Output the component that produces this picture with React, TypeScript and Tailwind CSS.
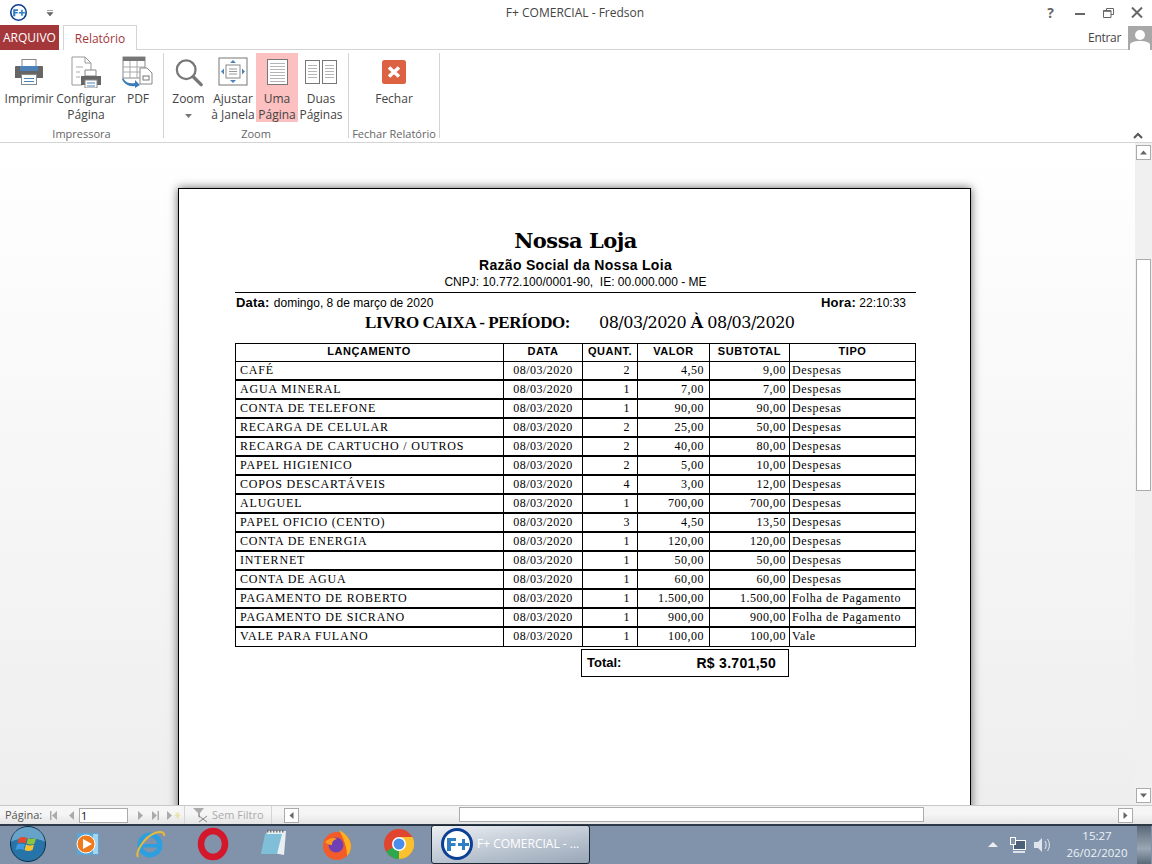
import React from "react";

const rows: [string, string, string, string, string][] = [
  ["CAFÉ", "2", "4,50", "9,00", "Despesas"],
  ["AGUA MINERAL", "1", "7,00", "7,00", "Despesas"],
  ["CONTA DE TELEFONE", "1", "90,00", "90,00", "Despesas"],
  ["RECARGA DE CELULAR", "2", "25,00", "50,00", "Despesas"],
  ["RECARGA DE CARTUCHO / OUTROS", "2", "40,00", "80,00", "Despesas"],
  ["PAPEL HIGIENICO", "2", "5,00", "10,00", "Despesas"],
  ["COPOS DESCARTÁVEIS", "4", "3,00", "12,00", "Despesas"],
  ["ALUGUEL", "1", "700,00", "700,00", "Despesas"],
  ["PAPEL OFICIO (CENTO)", "3", "4,50", "13,50", "Despesas"],
  ["CONTA DE ENERGIA", "1", "120,00", "120,00", "Despesas"],
  ["INTERNET", "1", "50,00", "50,00", "Despesas"],
  ["CONTA DE AGUA", "1", "60,00", "60,00", "Despesas"],
  ["PAGAMENTO DE ROBERTO", "1", "1.500,00", "1.500,00", "Folha de Pagamento"],
  ["PAGAMENTO DE SICRANO", "1", "900,00", "900,00", "Folha de Pagamento"],
  ["VALE PARA FULANO", "1", "100,00", "100,00", "Vale"],
];

const ui = "font-['Open_Sans','Noto_Sans',sans-serif]";
const cols = "grid grid-cols-[268px_79px_55px_72px_80px_126px]";
const serif = "font-['Liberation_Serif',serif]";
const arial = "font-['Liberation_Sans',sans-serif]";

function FLogo({ size }: { size: number }) {
  return (
    <svg width={size} height={size} viewBox="0 0 32 32">
      <circle cx="16" cy="16" r="14.5" fill="#fff" stroke="#0b3f94" strokeWidth="3" />
      <path d="M6 10h9v3H10v2h4.500v3H10v5H6zM17 15h4v-4h3v4h4v3h-4v4h-3v-4h-4z" fill="#2f7fc4" />
    </svg>
  );
}

function RibbonBtn({ label, icon, w, active }: { label: React.ReactNode; icon: React.ReactNode; w: string; active?: boolean }) {
  return (
    <div className={`${w} h-[69px] flex flex-col items-center shrink-0 ${active ? "bg-[#fcc0c0]" : ""}`}>
      <div className="h-[38px] shrink-0 flex items-center justify-center">{icon}</div>
      <div className="shrink-0 text-center text-[12px] leading-[16px] text-[#444] whitespace-nowrap">{label}</div>
    </div>
  );
}

function Group({ label, children, w }: { label: string; children: React.ReactNode; w: string }) {
  return (
    <div className={`${w} h-[85px] mt-[3px] flex flex-col border-r border-[#d4d4d4] shrink-0`}>
      <div className="flex justify-start pl-[1px] h-[72px] shrink-0">{children}</div>
      <div className="text-center text-[11px] leading-[17px] text-[#666] whitespace-nowrap">{label}</div>
    </div>
  );
}

function PrinterIcon() {
  return (
    <svg width="30" height="26" viewBox="0 0 30 26">
      <rect x="8" y="0.500" width="14" height="8" fill="#fff" stroke="#888" />
      <path d="M2 7h26a1 1 0 0 1 1 1v11H1V8a1 1 0 0 1 1-1z" fill="#666" />
      <rect x="6" y="7" width="18" height="5" fill="#4d82b8" />
      <rect x="7.500" y="15.500" width="15" height="10" fill="#fff" stroke="#888" />
      <path d="M10 19.500h10M10 22.500h10" stroke="#4d82b8" />
    </svg>
  );
}

function ConfigIcon() {
  return (
    <svg width="32" height="32" viewBox="0 0 32 32">
      <path d="M2 1h13l6 6v14H12v8H2z" fill="#fff" stroke="#999" />
      <path d="M15 1v6h6" fill="none" stroke="#999" />
      <path d="M6 11h7M6 16h4M6 21h4" stroke="#aaa" />
      <path d="M15 14h11v6H15z" fill="#fff" stroke="#888" />
      <path d="M11 20h20v9H11z" fill="#666" />
      <rect x="15" y="24" width="12" height="8" fill="#fff" stroke="#888" />
      <path d="M17 27h8M17 30h8" stroke="#4d82b8" />
    </svg>
  );
}

function PdfIcon() {
  return (
    <svg width="32" height="32" viewBox="0 0 32 32">
      <rect x="1" y="1" width="22" height="21" fill="#fff" stroke="#888" />
      <rect x="1" y="1" width="22" height="4" fill="#777" />
      <path d="M8 5v17M15 5v17M1 11h22M1 16h22" stroke="#aaa" />
      <path d="M18 12h7l5 5v11H18z" fill="#fff" stroke="#888" />
      <rect x="21" y="20" width="6" height="4" fill="#fff" stroke="#777" />
      <path d="M1 22c3 5 7 6 12 5v-3l5 5-5 3v-2c-6 1-11-2-13-7z" fill="#3d7cb8" />
    </svg>
  );
}

function ZoomIcon() {
  return (
    <svg width="28" height="29" viewBox="0 0 30 30">
      <circle cx="12" cy="12" r="10" fill="#fff" stroke="#777" strokeWidth="2.400" />
      <path d="M19.500 19.500L28 28" stroke="#777" strokeWidth="3.600" strokeLinecap="round" />
    </svg>
  );
}

function FitIcon() {
  return (
    <svg width="30" height="30" viewBox="0 0 30 30">
      <rect x="1" y="1" width="28" height="27" fill="#fff" stroke="#777" />
      <rect x="8" y="8" width="14" height="13" fill="#fff" stroke="#888" />
      <path d="M11 12h8M11 14.500h8M11 17h8" stroke="#999" />
      <path d="M15 3l3 3h-6zM15 26l3-3h-6zM3 14.500l3-3v6zM27 14.500l-3-3v6z" fill="#4d82b8" />
    </svg>
  );
}

function OnePageIcon() {
  return (
    <svg width="21" height="26" viewBox="0 0 21 26">
      <rect x="0.500" y="0.500" width="20" height="25" fill="#fff" stroke="#777" />
      <path d="M3 4.500h15M3 7.500h15M3 10.500h15M3 13.500h15M3 16.500h15M3 19.500h15M3 22.500h15" stroke="#b5b5b5" />
    </svg>
  );
}

function TwoPagesIcon() {
  return (
    <svg width="32" height="24" viewBox="0 0 32 24">
      <rect x="0.500" y="0.500" width="14" height="23" fill="#fff" stroke="#777" />
      <rect x="17.500" y="0.500" width="14" height="23" fill="#fff" stroke="#777" />
      <path d="M3 5.500h9M3 8.500h9M3 11.500h9M3 14.500h9M3 17.500h9M20 5.500h9M20 8.500h9M20 11.500h9M20 14.500h9M20 17.500h9" stroke="#b5b5b5" />
    </svg>
  );
}

function CloseIcon() {
  return (
    <svg width="24" height="24" viewBox="0 0 24 24">
      <rect width="24" height="24" rx="2.500" fill="#dc6243" />
      <path d="M7 7.500l10 9M17 7.500l-10 9" stroke="#fff" strokeWidth="3.600" />
    </svg>
  );
}

function Ribbon() {
  return (
    <div className="h-[93px] border-b border-[#d4d4d4] flex relative bg-white shrink-0">
      <Group label="Impressora" w="w-[164px]">
        <RibbonBtn w="w-[56px]" label="Imprimir" icon={<PrinterIcon />} />
        <RibbonBtn w="w-[58px]" label={<>Configurar<br />Página</>} icon={<ConfigIcon />} />
        <RibbonBtn w="w-[46px]" label="PDF" icon={<PdfIcon />} />
      </Group>
      <Group label="Zoom" w="w-[185px]">
        <RibbonBtn
          w="w-[47px]"
          label={
            <>
              Zoom
              <br />
              <svg className="inline-block align-middle" width="7" height="4" viewBox="0 0 7 4"><path d="M0 0h7L3.500 4z" fill="#777" /></svg>
            </>
          }
          icon={<ZoomIcon />}
        />
        <RibbonBtn w="w-[42px]" label={<>Ajustar<br />à Janela</>} icon={<FitIcon />} />
        <RibbonBtn w="w-[42px] ml-[2px]" active label={<>Uma<br />Página</>} icon={<OnePageIcon />} />
        <RibbonBtn w="w-[46px]" label={<>Duas<br />Páginas</>} icon={<TwoPagesIcon />} />
      </Group>
      <Group label="Fechar Relatório" w="w-[91px]">
        <RibbonBtn w="w-[88px]" label="Fechar" icon={<CloseIcon />} />
      </Group>
      <svg className="absolute right-[9px] bottom-[3px]" width="10" height="7" viewBox="0 0 10 7">
        <path d="M1 6l4-4 4 4" fill="none" stroke="#555" strokeWidth="2" />
      </svg>
    </div>
  );
}

function ScrollBtn({ d }: { d: string }) {
  return (
    <div className="w-[15px] h-[15px] border border-[#ababab] bg-white flex items-center justify-center shrink-0">
      <svg width="9" height="9" viewBox="0 0 9 9"><path d={d} fill="#666" /></svg>
    </div>
  );
}

function Report() {
  return (
    <div className="w-[793px] h-[700px] bg-white border border-black shadow-[0_0_9px_rgba(0,0,0,0.6)] shrink-0 pt-[40px] pl-[56px] text-black">
      <div className="w-[681px]">
        <div className="h-[28px] text-center text-[21px] leading-[24px] font-bold font-['DejaVu_Serif',serif] tracking-[-0.5px]">Nossa Loja</div>
        <div className={`${arial} text-center text-[14px] leading-[17px] font-bold tracking-[0.3px] h-[18px]`}>Razão Social da Nossa Loia</div>
        <div className={`${arial} text-center text-[12px] leading-[14px] h-[17px]`}>CNPJ: 10.772.100/0001-90,&nbsp; IE: 00.000.000 - ME</div>
        <div className="border-t border-black h-[20px] flex justify-between pl-[1px] pr-[10px] pt-[3px]">
          <span className={`${arial} text-[12px] leading-[14px]`}><b className="text-[13px] tracking-[0.2px]">Data:</b> <span className="ml-[1px]">domingo, 8 de março de 2020</span></span>
          <span className={`${arial} text-[12px] leading-[14px]`}><b className="text-[13px] tracking-[0.2px]">Hora:</b> 22:10:33</span>
        </div>
        <div className="h-[31px] pt-[1px] flex text-[16px] leading-[20px] whitespace-nowrap">
          <span className={`ml-[130px] w-[234px] font-bold text-[17px] tracking-[-0.4px] ${serif}`}>LIVRO CAIXA - PERÍODO:</span>
          <span className="tracking-[-0.5px] font-['DejaVu_Serif',serif]">08/03/2020 <b>À</b> 08/03/2020</span>
        </div>
        <div className="border-x border-t border-black">
          <div className={`${cols} -mx-[1px] h-[18px] ${arial} text-[11px] leading-[14px] font-bold tracking-[0.55px] text-center border-b border-black`}>
            <div>LANÇAMENTO</div>
            <div className="border-l border-black">DATA</div>
            <div className="border-l border-black whitespace-nowrap">QUANT.</div>
            <div className="border-l border-black">VALOR</div>
            <div className="border-l border-black">SUBTOTAL</div>
            <div className="border-l border-black">TIPO</div>
          </div>
          {rows.map((r, i) => (
            <div key={i} className={`${cols} -mx-[1px] h-[19px] ${serif} text-[12px] leading-[17px] tracking-[0.5px] ${i === rows.length - 1 ? "border-b" : "border-b-2"} border-black`}>
              <div className="pl-[5px] whitespace-nowrap tracking-[0.82px]">{r[0]}</div>
              <div className="border-l border-black text-center">08/03/2020</div>
              <div className="border-l border-black text-right pr-[7px]">{r[1]}</div>
              <div className="border-l border-black text-right pr-[5px]">{r[2]}</div>
              <div className="border-l border-black text-right pr-[3px]">{r[3]}</div>
              <div className="border-l border-black pl-[2px] whitespace-nowrap tracking-[0.62px]">{r[4]}</div>
            </div>
          ))}
        </div>
        <div className={`ml-[346px] mt-[2px] w-[208px] h-[28px] border border-black flex justify-between items-center pl-[5px] pr-[12px] ${arial} font-bold`}>
          <span className="text-[13px]">Total:</span>
          <span className="text-[14px] tracking-[0.3px]">R$ 3.701,50</span>
        </div>
      </div>
    </div>
  );
}

function TaskIcon({ children, w }: { children: React.ReactNode; w: string }) {
  return <div className={`${w} h-[38px] pb-[2px] flex items-center justify-center shrink-0`}>{children}</div>;
}

function NavIcon({ d, className }: { d: string; className?: string }) {
  return (
    <svg className={`shrink-0 ${className ?? ""}`} width="7" height="9" viewBox="0 0 7 9"><path d={d} fill="#aaa" /></svg>
  );
}

export default function App() {
  return (
    <div className={`w-[1152px] h-[864px] overflow-hidden flex flex-col bg-white ${ui}`}>
      {/* title bar */}
      <div className="h-[25px] flex items-center relative shrink-0">
        <div className="ml-[10px]"><FLogo size={17} /></div>
        <svg className="ml-[19px]" width="8" height="8" viewBox="0 0 8 8"><path d="M1 1.500h6M1 3.500h6L4 7z" fill="#666" stroke="#666" strokeWidth="0.600" /></svg>
        <div className="flex-1 text-center text-[12px] text-[#444] pl-[60px]">F+ COMERCIAL - Fredson</div>
        <div className="flex items-center text-[#666]">
          <div className="w-[29px] text-center font-bold text-[14px] leading-none">?</div>
          <div className="w-[29px] flex justify-center"><div className="w-[10px] h-[2px] bg-[#666] mt-[2px]" /></div>
          <div className="w-[29px] flex justify-center">
            <svg width="11" height="10" viewBox="0 0 11 10"><path d="M3.500 2.500V.500h7v6H8M.500 2.500h7.500v7H.500z" fill="none" stroke="#666" /><path d="M.500 3h7.500" stroke="#666" strokeWidth="1.600" /></svg>
          </div>
          <div className="w-[29px] flex justify-center pr-[2px]">
            <svg width="12" height="11" viewBox="0 0 12 11"><path d="M1 .500l10 10M11 .500l-10 10" stroke="#666" strokeWidth="2" /></svg>
          </div>
        </div>
      </div>
      {/* tabs */}
      <div className="h-[25px] flex items-end relative shrink-0 z-10">
        <div className="w-[59px] h-[25px] bg-[#a4373a] text-white text-[12px] leading-[25px] text-center">ARQUIVO</div>
        <div className="ml-[4px] w-[74px] h-[25px] border-x border-t border-[#d4d4d4] bg-white text-[#a4373a] text-[12px] leading-[25px] text-center">Relatório</div>
        <div className="flex-1 h-px bg-[#d4d4d4]" />
        <div className="absolute right-0 top-0 flex items-center h-[25px]">
          <span className="text-[12px] tracking-[-0.3px] text-[#444] mr-[7px]">Entrar</span>
          <svg width="24" height="24" viewBox="0 0 24 24">
            <rect width="24" height="24" fill="#a8a8a8" />
            <circle cx="12" cy="9" r="5" fill="#fff" />
            <path d="M2 24v-5c0-3 5-4 10-4s10 1 10 4v5z" fill="#fff" />
          </svg>
        </div>
      </div>
      <Ribbon />
      {/* content */}
      <div className="flex-1 min-h-0 flex">
        <div className="flex-1 min-w-0 bg-[linear-gradient(#ffffff,#eeeeee)] overflow-hidden pt-[45px] pl-[178px]">
          <Report />
        </div>
        <div className="w-[17px] flex flex-col px-[1px] py-[2px] bg-[#f0f0f0]">
          <ScrollBtn d="M4.500 2.500L8 6.500H1z" />
          <div className="flex-1 relative">
            <div className="absolute left-0 w-[15px] top-[99px] h-[232px] bg-white border border-[#ababab]" />
          </div>
          <ScrollBtn d="M1 2.500h7L4.500 6.500z" />
        </div>
      </div>
      {/* status bar */}
      <div className="h-[19px] border-t border-[#c8c8c8] bg-[linear-gradient(#f5f5f5_45%,#e4e4e4)] flex items-center text-[11px] text-[#555] shrink-0">
        <div className="w-[185px] flex items-center h-full border-r border-[#d4d4d4] pl-[5px]">
          <span className="w-[45px] shrink-0">Página:</span>
          <NavIcon d="M0 0h1.500v9H0zM7 0v9L2 4.500z" />
          <NavIcon className="ml-[11px]" d="M6 0v9L1 4.500z" />
          <div className="ml-[4px] w-[49px] h-[15px] bg-white border border-[#ababab] text-[11px] leading-[13px] text-[#111] pl-[1px] shrink-0">1</div>
          <NavIcon className="ml-[9px]" d="M1 0v9l5-4.500z" />
          <NavIcon className="ml-[8px]" d="M0 0v9l5-4.500zM5.500 0H7v9H5.500z" />
          <NavIcon className="ml-[8px]" d="M0 0v9l5-4.500z" />
          <svg className="shrink-0" width="7" height="9" viewBox="0 0 7 9"><path d="M3.500 1v7M.5 4.500h6M1.500 2l4 5M5.500 2l-4 5" stroke="#e6e2a8" /></svg>
        </div>
        <div className="w-[87px] flex items-center h-full border-r border-[#d4d4d4] pl-[7px] text-[#aaa]">
          <svg className="shrink-0" width="17" height="16" viewBox="0 0 17 16"><path d="M1 1h11L8 6v5L6 9.500V6z" fill="#aaa" /><path d="M7 9l8 6M15 9l-8 6" stroke="#888" /></svg>
          <span className="ml-[3px] text-[11px] whitespace-nowrap">Sem Filtro</span>
        </div>
        <div className="w-[863px] h-full flex items-center pl-[12px] pr-[2px]">
          <ScrollBtn d="M2.500 4.500L6.500 1v7z" />
          <div className="flex-1 relative h-full">
            <div className="absolute left-[160px] w-[465px] top-[1px] h-[15px] bg-white border border-[#ababab]" />
          </div>
          <ScrollBtn d="M6.500 4.500L2.500 1v7z" />
        </div>
      </div>
      {/* taskbar */}
      <div className="h-[40px] bg-[#8093ab] border-t-[2px] border-[#2f3a48] flex items-center relative shrink-0">
        <TaskIcon w="w-[55px]">
          <svg width="36" height="36" viewBox="0 0 36 36">
            <circle cx="18" cy="18" r="17.500" fill="#2674a8" stroke="#0d2c48" />
            <path d="M1 16C2 6 10 1 18 1s16 5 17 15c-8-5-26-5-34 0z" fill="#9ccbe4" opacity=".55" />
            <path d="M9 12c3-1.500 5-1.500 8 0l-1.500 5.500c-3-1.300-5-1.300-8 0z" fill="#e2492f" />
            <path d="M18 12c3 1.300 5 1.300 8 0l-1.500 5.500c-3 1.300-5 1.300-8 0z" fill="#8cc43c" />
            <path d="M7 18.500c3-1.300 5-1.300 8 0l-1.500 5.500c-3-1.300-5-1.300-8 0z" fill="#3f9be0" />
            <path d="M16 18.500c3 1.300 5 1.300 8 0L22.500 24c-3 1.300-5 1.300-8 0z" fill="#f6c12f" />
          </svg>
        </TaskIcon>
        <TaskIcon w="w-[66px]">
          <svg width="26" height="26" viewBox="0 0 26 26">
            <rect x="2" y="2" width="22" height="22" rx="1" fill="#5aa6d6" />
            <rect x="18" y="3" width="5" height="20" fill="#a5d4ee" />
            <circle cx="11" cy="13" r="9" fill="#ef7b1c" stroke="#fff" strokeWidth="1" />
            <path d="M8 8l9 5-9 5z" fill="#fff" />
          </svg>
        </TaskIcon>
        <TaskIcon w="w-[60px]">
          <svg width="32" height="32" viewBox="0 0 32 32">
            <circle cx="15" cy="17" r="10" fill="none" stroke="#2b9fe0" strokeWidth="5" />
            <path d="M7 16h17v3.500H8z" fill="#2b9fe0" />
            <path d="M3 29C0 25 9 9 20 5c6-2 10-1 9 3" fill="none" stroke="#e8b93a" strokeWidth="2" />
          </svg>
        </TaskIcon>
        <TaskIcon w="w-[64px]">
          <svg width="32" height="34" viewBox="0 0 32 34">
            <ellipse cx="16" cy="17" rx="12" ry="13" fill="none" stroke="#d3182b" strokeWidth="6.500" />
          </svg>
        </TaskIcon>
        <TaskIcon w="w-[58px]">
          <svg width="30" height="30" viewBox="0 0 30 30">
            <path d="M8 2h19l-2 24-21-4z" fill="#e8eef2" />
            <path d="M6 5h17l-5 20H2z" fill="#7fc0d8" />
            <path d="M8 2h17" stroke="#777" strokeWidth="3" strokeDasharray="1.500 1.500" />
          </svg>
        </TaskIcon>
        <TaskIcon w="w-[68px]">
          <svg width="32" height="32" viewBox="0 0 32 32">
            <circle cx="16" cy="18" r="14" fill="#f25c2a" />
            <path d="M18 2c6 3 12 9 12 16 0 5-2 8-4 10 0-8-2-15-8-26z" fill="#ffb01f" />
            <circle cx="15" cy="17" r="7.500" fill="#6f3fb4" />
            <path d="M4 14c4-4 9-5 12-3-4 1-5 3-5 6-3 0-5-1-7-3z" fill="#ff9a1f" />
          </svg>
        </TaskIcon>
        <TaskIcon w="w-[56px]">
          <svg width="30" height="30" viewBox="0 0 30 30">
            <circle cx="15" cy="15" r="15" fill="#e2452f" />
            <path d="M15 15L2 22.500A15 15 0 0 0 17 30l11-22H15z" fill="#2ea84f" />
            <path d="M15 8h13.500A15 15 0 0 1 15 30z" fill="#fbc02d" />
            <circle cx="15" cy="15" r="7" fill="#fff" />
            <circle cx="15" cy="15" r="5.500" fill="#4a8eea" />
          </svg>
        </TaskIcon>
        <div className="ml-[4px] self-start -mt-[1px] w-[159px] h-[39px] pb-[2px] rounded-[3px] border border-[#1d2733] bg-[linear-gradient(170deg,#eceff3,#bcc6d2_55%,#98a6b7)] flex items-center pl-[9px] shrink-0">
          <FLogo size={32} />
          <span className="ml-[4px] text-[12px] text-white whitespace-nowrap">F+ COMERCIAL - ...</span>
        </div>
        <div className="ml-auto flex items-center h-full text-white pr-[1px]">
          <svg width="10" height="6" viewBox="0 0 10 6"><path d="M5 0l5 5H0z" fill="#eee" /></svg>
          <svg className="ml-[11px]" width="18" height="16" viewBox="0 0 18 16">
            <rect x="4.500" y="3.500" width="12" height="9" fill="#4d6278" stroke="#fff" />
            <rect x="1.500" y="0.500" width="5" height="7" fill="#8093ab" stroke="#fff" />
            <path d="M4 15h12" stroke="#fff" strokeWidth="1.500" />
          </svg>
          <svg className="ml-[7px]" width="16" height="16" viewBox="0 0 16 16">
            <path d="M0 5h4l4-4v14l-4-4H0z" fill="#dfe5ec" />
            <path d="M11 4c1.500 2.500 1.500 5.500 0 8M13.500 2c2.500 3.500 2.500 8.500 0 12" fill="none" stroke="#e8edf2" />
          </svg>
          <div className="w-[80px] ml-[7px] pb-[2px] text-center text-[11.500px] leading-[17px] text-[#eef2f6]">
            <div>15:27</div>
            <div>26/02/2020</div>
          </div>
          <div className="w-[14px] h-full bg-[linear-gradient(#5b6a7a,#9aa7b5_60%,#5b6a7a)]" />
        </div>
      </div>
    </div>
  );
}
